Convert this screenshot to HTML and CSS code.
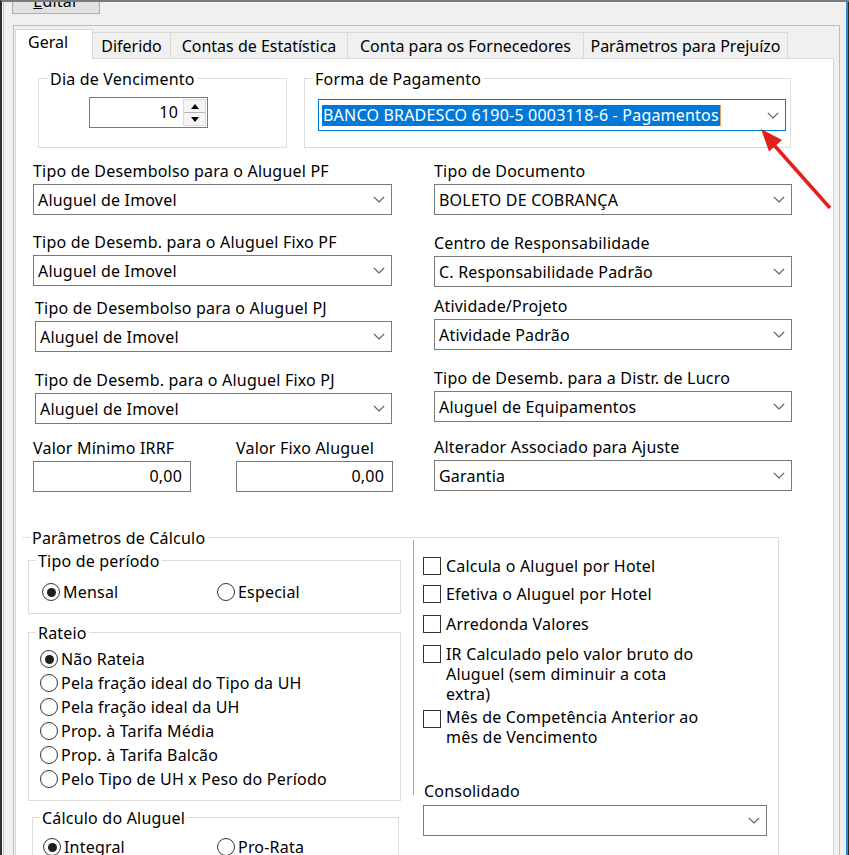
FILE: index.html
```html
<!DOCTYPE html>
<html lang="pt">
<head>
<meta charset="utf-8">
<title>Geral</title>
<link rel="stylesheet" href="styles.css">
</head>
<body>
<div class="win">
  <div class="main">
    <div class="toolbar"><div class="btn"><u>E</u>ditar</div></div>
    <div class="frame">
      <div class="tabs">
        <div class="tab active t-geral">Geral</div>
        <div class="tab t-dif">Diferido</div>
        <div class="tab t-cont">Contas de Estatística</div>
        <div class="tab t-forn">Conta para os Fornecedores</div>
        <div class="tab t-prej">Parâmetros para Prejuízo</div>
      </div>
      <div class="panel">
        <div class="top-groups">
          <div class="gbox g-dia">
            <div class="gtitle">Dia de Vencimento</div>
            <div class="spin">
              <div class="num">10</div>
              <div class="spin-btns">
                <div class="sb"><span class="tri-up"></span></div>
                <div class="sb"><span class="tri-down"></span></div>
              </div>
            </div>
          </div>
          <div class="gbox g-forma">
            <div class="gtitle">Forma de Pagamento</div>
            <div class="combo focus">
              <span class="sel">BANCO BRADESCO 6190-5 0003118-6 - Pagamentos</span>
              <svg class="chev" width="12" height="7" viewBox="0 0 12 7"><path d="M0.8 0.8 L6 6 L11.2 0.8" fill="none" stroke="#5a5a5a" stroke-width="1.2"/></svg>
            </div>
          </div>
        </div>

        <div class="fields">
          <div class="col col-left">
            <div class="field">
              <div class="lbl">Tipo de Desembolso para o Aluguel PF</div>
              <div class="combo"><span>Aluguel de Imovel</span><svg class="chev" width="12" height="7" viewBox="0 0 12 7"><path d="M0.8 0.8 L6 6 L11.2 0.8" fill="none" stroke="#5a5a5a" stroke-width="1.2"/></svg></div>
            </div>
            <div class="field l2">
              <div class="lbl">Tipo de Desemb. para o Aluguel Fixo PF</div>
              <div class="combo"><span>Aluguel de Imovel</span><svg class="chev" width="12" height="7" viewBox="0 0 12 7"><path d="M0.8 0.8 L6 6 L11.2 0.8" fill="none" stroke="#5a5a5a" stroke-width="1.2"/></svg></div>
            </div>
            <div class="field l3 indent">
              <div class="lbl">Tipo de Desembolso para o Aluguel PJ</div>
              <div class="combo"><span>Aluguel de Imovel</span><svg class="chev" width="12" height="7" viewBox="0 0 12 7"><path d="M0.8 0.8 L6 6 L11.2 0.8" fill="none" stroke="#5a5a5a" stroke-width="1.2"/></svg></div>
            </div>
            <div class="field l4 indent">
              <div class="lbl">Tipo de Desemb. para o Aluguel Fixo PJ</div>
              <div class="combo"><span>Aluguel de Imovel</span><svg class="chev" width="12" height="7" viewBox="0 0 12 7"><path d="M0.8 0.8 L6 6 L11.2 0.8" fill="none" stroke="#5a5a5a" stroke-width="1.2"/></svg></div>
            </div>
            <div class="values l5">
              <div class="field">
                <div class="lbl">Valor Mínimo IRRF</div>
                <div class="inp">0,00</div>
              </div>
              <div class="field">
                <div class="lbl">Valor Fixo Aluguel</div>
                <div class="inp">0,00</div>
              </div>
            </div>
          </div>

          <div class="col col-right">
            <div class="field">
              <div class="lbl">Tipo de Documento</div>
              <div class="combo"><span>BOLETO DE COBRANÇA</span><svg class="chev" width="12" height="7" viewBox="0 0 12 7"><path d="M0.8 0.8 L6 6 L11.2 0.8" fill="none" stroke="#5a5a5a" stroke-width="1.2"/></svg></div>
            </div>
            <div class="field r2">
              <div class="lbl">Centro de Responsabilidade</div>
              <div class="combo"><span>C. Responsabilidade Padrão</span><svg class="chev" width="12" height="7" viewBox="0 0 12 7"><path d="M0.8 0.8 L6 6 L11.2 0.8" fill="none" stroke="#5a5a5a" stroke-width="1.2"/></svg></div>
            </div>
            <div class="field r3">
              <div class="lbl">Atividade/Projeto</div>
              <div class="combo"><span>Atividade Padrão</span><svg class="chev" width="12" height="7" viewBox="0 0 12 7"><path d="M0.8 0.8 L6 6 L11.2 0.8" fill="none" stroke="#5a5a5a" stroke-width="1.2"/></svg></div>
            </div>
            <div class="field r4">
              <div class="lbl">Tipo de Desemb. para a Distr. de Lucro</div>
              <div class="combo"><span>Aluguel de Equipamentos</span><svg class="chev" width="12" height="7" viewBox="0 0 12 7"><path d="M0.8 0.8 L6 6 L11.2 0.8" fill="none" stroke="#5a5a5a" stroke-width="1.2"/></svg></div>
            </div>
            <div class="field r5">
              <div class="lbl">Alterador Associado para Ajuste</div>
              <div class="combo"><span>Garantia</span><svg class="chev" width="12" height="7" viewBox="0 0 12 7"><path d="M0.8 0.8 L6 6 L11.2 0.8" fill="none" stroke="#5a5a5a" stroke-width="1.2"/></svg></div>
            </div>
          </div>
        </div>

        <div class="gbox g-calc">
          <div class="gtitle">Parâmetros de Cálculo</div>
          <div class="calc-body">
            <div class="calc-left">
              <div class="gbox g-periodo">
                <div class="gtitle">Tipo de período</div>
                <div class="radio-row">
                  <div class="ritem"><span class="radio on"></span>Mensal</div>
                  <div class="ritem"><span class="radio"></span>Especial</div>
                </div>
              </div>
              <div class="gbox g-rateio">
                <div class="gtitle">Rateio</div>
                <div class="radio-list">
                  <div class="ritem"><span class="radio on"></span>Não Rateia</div>
                  <div class="ritem"><span class="radio"></span>Pela fração ideal do Tipo da UH</div>
                  <div class="ritem"><span class="radio"></span>Pela fração ideal da UH</div>
                  <div class="ritem"><span class="radio"></span>Prop. à Tarifa Média</div>
                  <div class="ritem"><span class="radio"></span>Prop. à Tarifa Balcão</div>
                  <div class="ritem"><span class="radio"></span>Pelo Tipo de UH x Peso do Período</div>
                </div>
              </div>
              <div class="gbox g-aluguel">
                <div class="gtitle">Cálculo do Aluguel</div>
                <div class="radio-row">
                  <div class="ritem"><span class="radio on"></span>Integral</div>
                  <div class="ritem"><span class="radio"></span>Pro-Rata</div>
                </div>
              </div>
            </div>
            <div class="calc-right">
              <div class="checks">
                <div class="chk"><span class="cbox"></span><span class="ctext">Calcula o Aluguel por Hotel</span></div>
                <div class="chk c2"><span class="cbox"></span><span class="ctext">Efetiva o Aluguel por Hotel</span></div>
                <div class="chk c3"><span class="cbox"></span><span class="ctext">Arredonda Valores</span></div>
                <div class="chk c4"><span class="cbox"></span><span class="ctext">IR Calculado pelo valor bruto do<br>Aluguel (sem diminuir a cota<br>extra)</span></div>
                <div class="chk c5"><span class="cbox"></span><span class="ctext">Mês de Competência Anterior ao<br>mês de Vencimento</span></div>
                <div class="lbl lbl-consol">Consolidado</div>
              </div>
              <div class="combo consol"><span></span><svg class="chev" width="12" height="7" viewBox="0 0 12 7"><path d="M0.8 0.8 L6 6 L11.2 0.8" fill="none" stroke="#5a5a5a" stroke-width="1.2"/></svg></div>
            </div>
          </div>
        </div>
      </div>
    </div>
  </div>
  <div class="edge-right"></div>
  <svg class="arrow" width="849" height="855" viewBox="0 0 849 855">
    <line x1="830" y1="208" x2="774" y2="145" stroke="#e3201b" stroke-width="3.5"/>
    <polygon points="761,129 769,151.5 782,140" fill="#e3201b"/>
  </svg>
</div>
</body>
</html>
```

FILE: styles.css
```css
* { box-sizing: border-box; }
html, body { margin: 0; padding: 0; }
body {
  font-family: "Noto Sans", "Open Sans", sans-serif;
  font-size: 16px;
  letter-spacing: 0.2px;
  color: #000;
  background: #f0f0f0;
  overflow: hidden;
}

.win {
  position: relative;
  display: flex;
  width: 849px;
  height: 855px;
  overflow: hidden;
  border-top: 2px solid #7b7b7b;
  border-left: 2px solid #2e2e2e;
  background: #f0f0f0;
}
.main {
  flex: 1;
  min-width: 0;
  border-left: 1px solid #ffffff;
  box-shadow: inset 1px 0 0 #b7c6d6;
}
.edge-right {
  width: 3px;
  border-left: 2px solid #2b8bd6;
  background: #262626;
}

.toolbar { display: flow-root; height: 12px; padding-left: 9px; }
.btn {
  width: 88px;
  height: 24px;
  margin-top: -12px;
  border: 1px solid #adadad;
  background: #e1e1e1;
  line-height: 20px;
  text-align: center;
}

.frame {
  margin: 11px 6px 0 10px;
  border: 1px solid #bdbdbd;
  border-bottom: 0;
  padding: 0 5px 0 1px;
  height: 900px;
}

.tabs {
  display: flex;
  align-items: flex-end;
  height: 29px;
  margin-top: 3px;
}
.tab {
  height: 26px;
  border: 1px solid #d9d9d9;
  border-bottom: 0;
  background: #f0f0f0;
  margin-left: -1px;
  padding-top: 3px;
  line-height: 20px;
  text-align: center;
  white-space: nowrap;
  letter-spacing: 0;
}
.tab.active {
  position: relative;
  z-index: 1;
  height: 30px;
  margin-left: 0;
  margin-bottom: -1px;
  background: #fff;
  padding-top: 2px;
  padding-left: 12px;
  text-align: left;
}
.t-geral { width: 78px; }
.t-dif { width: 79px; }
.t-cont { width: 178px; }
.t-forn { width: 237px; }
.t-prej { width: 205px; }

.panel {
  border: 1px solid #d9d9d9;
  background: #fff;
  height: 900px;
}

/* group boxes */
.gbox { border: 1px solid #dcdcdc; }
.gtitle {
  width: max-content;
  height: 20px;
  line-height: 20px;
  margin-top: -10px;
  padding: 0 2px;
  background: #fff;
  white-space: nowrap;
}

.top-groups {
  display: flex;
  gap: 17px;
  margin: 19px 0 0 22px;
}
.g-dia { width: 249px; height: 70px; }
.g-dia .gtitle { margin-left: 9px; }
.g-forma { width: 487px; height: 70px; }
.g-forma .gtitle { margin-left: 8px; }

.spin {
  display: flex;
  width: 119px;
  height: 31px;
  margin: 8px 0 0 50px;
  border: 1px solid #7a7a7a;
  background: #fff;
}
.spin .num {
  flex: 1;
  text-align: right;
  padding-right: 5px;
  line-height: 29px;
}
.spin-btns {
  display: flex;
  flex-direction: column;
  width: 23px;
  margin: 1px 1px 1px 0;
  border: 1px solid #dadada;
}
.sb {
  flex: 1;
  display: flex;
  align-items: center;
  justify-content: center;
  background: #f4f4f4;
}
.sb + .sb { border-top: 1px solid #b5b5b5; }
.tri-up {
  width: 0; height: 0;
  border-left: 4.5px solid transparent;
  border-right: 4.5px solid transparent;
  border-bottom: 5px solid #000;
}
.tri-down {
  width: 0; height: 0;
  border-left: 4.5px solid transparent;
  border-right: 4.5px solid transparent;
  border-top: 5px solid #000;
}

/* combos & inputs */
.combo {
  display: flex;
  align-items: center;
  justify-content: space-between;
  height: 31px;
  padding: 0 6px 0 4px;
  border: 1px solid #7a7a7a;
  background: #fff;
  white-space: nowrap;
}
.chev { flex: none; display: block; }
.combo.focus {
  width: 468px;
  height: 32px;
  margin: 10px 0 0 13px;
  padding-left: 3px;
  border-color: #0078d7;
}
.sel {
  background: #0078d7;
  color: #fff;
  line-height: 21px;
  padding: 0 1px;
  border-right: 1px solid #e3a062;
}
.inp {
  height: 31px;
  border: 1px solid #7a7a7a;
  background: #fff;
  text-align: right;
  padding-right: 8px;
  line-height: 29px;
}

.fields {
  display: flex;
  gap: 42px;
  margin-top: 13px;
  padding-left: 17px;
}
.col-left { width: 359px; }
.col-right { width: 358px; }
.lbl {
  height: 20px;
  line-height: 20px;
  margin-bottom: 3px;
  white-space: nowrap;
}
.field.indent { margin-left: 2px; }
.l2 { margin-top: 17px; }
.l3 { margin-top: 12px; }
.l4 { margin-top: 18px; }
.l5 { margin-top: 14px; }
.r2 { margin-top: 18px; }
.r3 { margin-top: 9px; }
.r4 { margin-top: 18px; }
.r5 { margin-top: 15px; }
.values {
  display: grid;
  grid-template-columns: 158px 157px;
  column-gap: 45px;
}

/* parametros de calculo */
.g-calc {
  width: 757px;
  margin: 45px 0 0 6px;
  border-left: 0;
  border-bottom: 0;
}
.g-calc > .gtitle { margin-left: 8px; }
.calc-body {
  display: flex;
  margin-top: -8px;
}
.calc-left {
  width: 373px;
  margin-left: 6px;
  padding-top: 20px;
}
.calc-right {
  flex: 1;
  margin-left: 12px;
}

.g-periodo { padding-bottom: 11px; }
.g-periodo .gtitle { margin-left: 7px; }
.g-periodo .radio-row { margin-top: 11px; padding-left: 13px; grid-template-columns: 175px auto; }

.g-rateio { margin-top: 18px; padding-bottom: 11px; }
.g-rateio .gtitle { margin-left: 7px; }
.radio-list {
  display: flex;
  flex-direction: column;
  gap: 4px;
  margin-top: 6px;
  padding-left: 11px;
}

.g-aluguel {
  width: 367px;
  margin: 16px 0 0 4px;
  padding-bottom: 30px;
}
.g-aluguel .gtitle { margin-left: 7px; }
.g-aluguel .radio-row { margin-top: 9px; padding-left: 10px; grid-template-columns: 174px auto; }

.radio-row { display: grid; }
.ritem {
  display: flex;
  align-items: center;
  gap: 3px;
  height: 20px;
  line-height: 20px;
  white-space: nowrap;
}
.radio {
  flex: none;
  display: flex;
  align-items: center;
  justify-content: center;
  width: 18px;
  height: 18px;
  border: 1px solid #333;
  border-radius: 50%;
  background: #fff;
}
.radio.on::after {
  content: "";
  width: 9px;
  height: 9px;
  border-radius: 50%;
  background: #1f1f1f;
}

.checks {
  height: 255px;
  border-left: 1px solid #a6a6a6;
  padding: 16px 0 0 9px;
}
.chk {
  display: flex;
  align-items: flex-start;
  gap: 5px;
}
.cbox {
  flex: none;
  width: 18px;
  height: 18px;
  margin-top: 1px;
  border: 1px solid #333;
  background: #fff;
}
.ctext { line-height: 20px; white-space: nowrap; }
.c2 { margin-top: 8px; }
.c3 { margin-top: 10px; }
.c4 { margin-top: 10px; }
.c5 { margin-top: 3px; }
.c5 .cbox { margin-top: 3px; }
.lbl-consol { margin: 34px 0 0 1px; }
.combo.consol {
  width: 344px;
  margin: 10px 0 0 10px;
}

.arrow {
  position: absolute;
  left: -2px;
  top: -2px;
  pointer-events: none;
}
```
